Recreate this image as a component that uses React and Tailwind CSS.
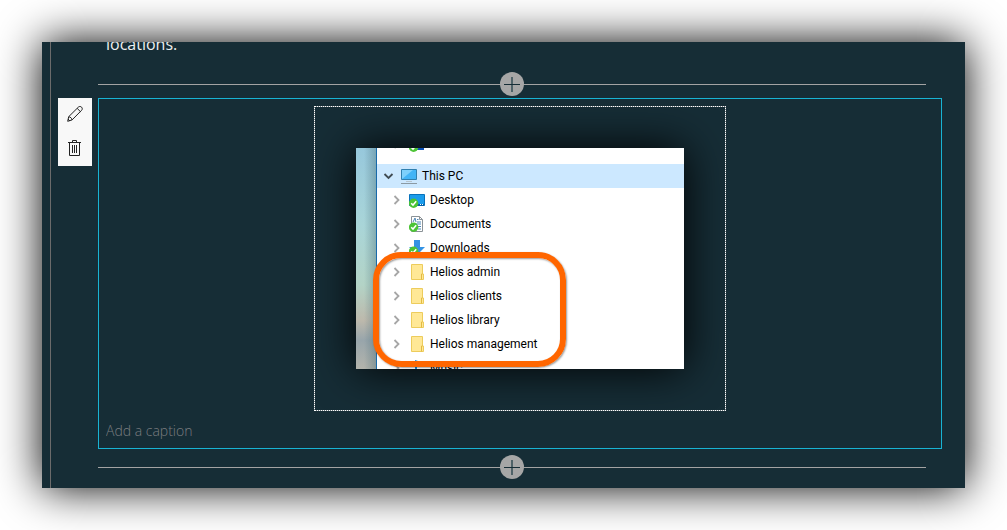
import React from "react";

function Divider() {
  return (
    <div className="relative mr-4 flex h-6 items-center justify-center">
      <div className="h-px w-full bg-[#a3a3a3]" />
      <button type="button" aria-label="Add section" className="absolute flex size-6 items-center justify-center rounded-full bg-[#a6a6a6]">
        <svg className="size-4" viewBox="0 0 16 16" fill="none" shapeRendering="crispEdges">
          <path d="M7 1h2v15H7z" fill="#4f6268" />
          <path d="M0 8h16v1H0z" fill="#162d36" />
        </svg>
      </button>
    </div>
  );
}

function Check() {
  return (
    <g>
      <circle cx="4.6" cy="11.2" r="4.7" fill="#4cc435" />
      <path d="M2.2 11.2l1.8 1.9 3.2-3.8" stroke="#fff" strokeWidth="1.5" fill="none" />
    </g>
  );
}

function Icon({ type }) {
  return (
    <svg className="size-4 shrink-0" viewBox="0 0 16 16" fill="none">
      {type === "pc" && (
        <g>
          <path d="M.5 1.5h15v10H.5z" fill="#7dd0fb" stroke="#2f7fae" />
          <path d="M1 11L12 2h3v9z" fill="#42b4f6" />
          <path d="M5 13.5h6" stroke="#b6c3cc" />
          <path d="M0 15.5h16" stroke="#8b9aa4" />
        </g>
      )}
      {type === "desktop" && (
        <g>
          <path d="M.5 2.5h15v11H.5z" fill="#1b9cec" stroke="#0872bb" />
          <path d="M1 12h14v2H1z" fill="#0762a8" />
          <path d="M11 12.5h1m1 0h1" stroke="#fff" />
          <Check />
        </g>
      )}
      {type === "document" && (
        <g>
          <path d="M2.5.5h8l3 3v12h-11z" fill="#fff" stroke="#8b9297" />
          <path d="M10.5.5v3h3" stroke="#8b9297" />
          <path d="M4 6l2-4 1 4M8 3.5h1.5M8 6h4M6 8h6M9 10.5h3M9 13h3" stroke="#4d86b5" />
          <Check />
        </g>
      )}
      {type === "download" && (
        <g>
          <path d="M5 0h6v7h5l-8 8-8-8h5z" fill="#3493e5" />
          <Check />
        </g>
      )}
      {type === "folder" && (
        <g>
          <path d="M2.5.5h11v9.5h1v5.5h-12z" fill="#ffe896" stroke="#edcc5c" />
          <path d="M12.5 15.5v-5.5h1" stroke="#e2ba43" />
        </g>
      )}
      {type === "music" && (
        <g>
          <path d="M6 0l6 2v4L8 4.5V13H6z" fill="#168bdc" />
          <ellipse cx="5" cy="13" rx="3" ry="2" fill="#168bdc" />
        </g>
      )}
      {type === "cloud" && (
        <g>
          <path d="M7 9h8v5H7z" fill="#0b50b8" />
          <Check />
        </g>
      )}
    </svg>
  );
}

function Chevron({ open }) {
  return (
    <svg className="size-3 shrink-0" viewBox="0 0 12 12" fill="none">
      {open ? (
        <path d="M1.5 4l4 4 4-4" stroke="#404b53" strokeWidth="1.8" />
      ) : (
        <path d="M3.5 2l4 4-4 4" stroke="#a6a6a6" strokeWidth="1.8" />
      )}
    </svg>
  );
}

const items = [
  { name: "Desktop", icon: "desktop" },
  { name: "Documents", icon: "document" },
  { name: "Downloads", icon: "download" },
  { name: "Helios admin", icon: "folder" },
  { name: "Helios clients", icon: "folder" },
  { name: "Helios library", icon: "folder" },
  { name: "Helios management", icon: "folder" },
  { name: "Music", icon: "music" },
];

function FolderTree() {
  return (
    <div className="relative flex h-[221px] w-[328px] overflow-hidden">
      <div className="w-5 shrink-0 bg-[linear-gradient(to_bottom,#97c8dc_0%,#a9d5d8_35%,#b3d3c6_62%,#bdb9ac_78%,#98a5ab_87%,#b3b4ac_100%)]">
        <div className="h-full bg-linear-to-r from-transparent via-transparent via-40% to-[#44697560]" />
      </div>
      <ul className="-mt-4 grow self-start border-l border-[#1769aa] bg-white font-[Roboto,sans-serif] text-[12px] leading-6 text-black">
        <li className="mb-2 flex h-6 items-center gap-[6px] pl-[14px]">
          <Chevron />
          <Icon type="cloud" />
        </li>
        <li className="flex h-6 items-center gap-[6px] bg-[#cce8ff] pl-[6px]">
          <Chevron open />
          <span className="flex items-center gap-[5px]"><Icon type="pc" />This PC</span>
        </li>
        {items.map((item) => (
          <li key={item.name} className="flex h-6 items-center gap-[6px] pl-[14px]">
            <Chevron />
            <span className="flex items-center gap-[5px]"><Icon type={item.icon} />{item.name}</span>
          </li>
        ))}
      </ul>
      <div className="absolute top-[104px] left-[17px] h-[115px] w-[193px] rounded-[28px] border-6 border-[#ff6600] shadow-[1px_1px_2px_#0006,inset_1px_1px_2px_#0006]" />
    </div>
  );
}

export default function App() {
  return (
    <main className="bg-white p-[42px] font-['Open_Sans','Noto_Sans',sans-serif]">
      <section className="flex bg-[#162d36] pl-2 shadow-[0_0_42px_#000]">
        <div className="flex grow gap-[6px] border-l border-[#6b6b6b] pr-[23px] pb-[9px] pl-[7px]">
          <div className="mt-14 flex h-[68px] w-[34px] shrink-0 flex-col bg-[#f8f8f8] text-[#222]">
            <button type="button" aria-label="Edit" className="flex h-8 items-center justify-center">
              <svg className="size-4" viewBox="0 0 16 16" fill="none" stroke="currentColor">
                <path d="M.7 15.3l1-4.6 9.7-9.6c1-1 2.5-.7 3.2.1.9.9.9 2.2 0 3.1l-9.5 9.6zM10.2 2.4l3.3 3.3M1.7 10.8c1.7.1 3.2 1.4 3.3 3.1M1 13l2 2" />
              </svg>
            </button>
            <button type="button" aria-label="Delete" className="flex h-9 items-center justify-center">
              <svg className="size-4" viewBox="0 0 16 16" fill="none" stroke="currentColor">
                <path d="M1 2.5h13M5.5 2.5v-2h4v2M2.5 3v12.5h10V3M5.5 5v8M7.5 5v8M9.5 5v8" />
              </svg>
            </button>
          </div>
          <div className="min-w-0 grow">
            <div className="flex h-[30px] items-start overflow-hidden px-2">
              <p className="-mt-[10px] text-[16px] leading-6 text-[#eef0f1]">locations.</p>
            </div>
            <Divider />
            <figure className="mt-[2px] mb-[6px] border border-[#18b3d3] p-[7px]">
              <div className="mx-auto w-fit border border-dotted border-white bg-[#6f7a7e]">
                <div className="overflow-hidden bg-[#162d36] p-[41px]">
                  <div className="shadow-[0_0_42px_#000]">
                    <FolderTree />
                  </div>
                </div>
              </div>
              <figcaption className="mt-[10px]">
                <input aria-label="Caption" placeholder="Add a caption" className="block h-5 w-full bg-transparent text-[14px] leading-5 font-light placeholder:text-[#7b7d80] focus:outline-none" />
              </figcaption>
            </figure>
            <Divider />
          </div>
        </div>
      </section>
    </main>
  );
}
